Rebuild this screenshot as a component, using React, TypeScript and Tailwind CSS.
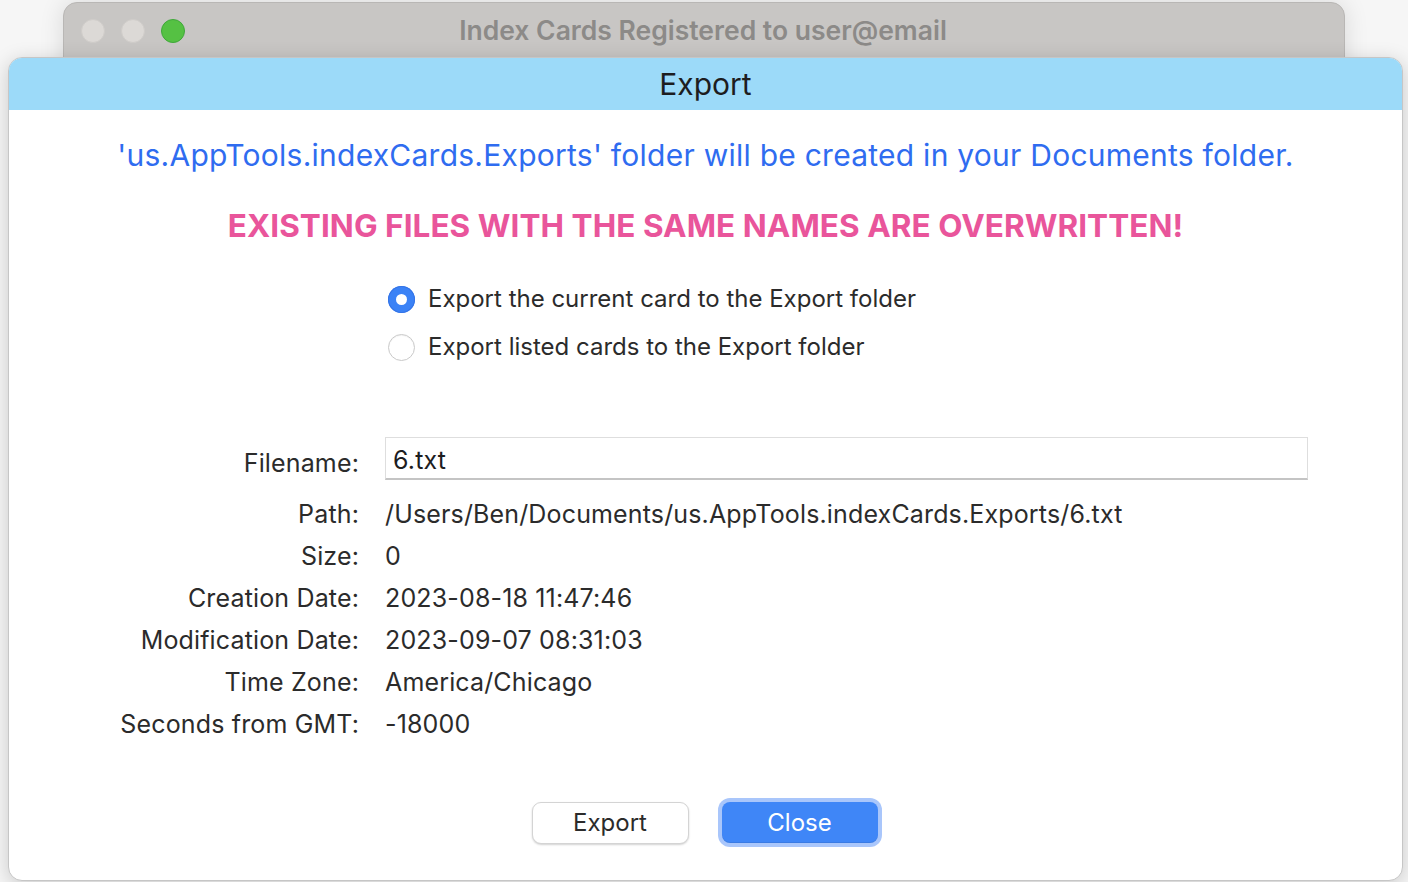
import React from "react";

const font = { fontFamily: "Inter, 'Noto Sans', 'Liberation Sans', sans-serif" };

const details: [string, string][] = [
  ["Path:", "/Users/Ben/Documents/us.AppTools.indexCards.Exports/6.txt"],
  ["Size:", "0"],
  ["Creation Date:", "2023-08-18 11:47:46"],
  ["Modification Date:", "2023-09-07 08:31:03"],
  ["Time Zone:", "America/Chicago"],
  ["Seconds from GMT:", "-18000"],
];

function Radio({ checked, label }: { checked?: boolean; label: string }) {
  return (
    <label className="flex h-[48px] items-center gap-[13px]">
      {checked ? (
        <span className="flex h-[27px] w-[27px] items-center justify-center rounded-full bg-[#3b82f6] shadow-[inset_0_0_0_1px_#3574e6]">
          <span className="h-[11px] w-[11px] rounded-full bg-white" />
        </span>
      ) : (
        <span className="h-[27px] w-[27px] rounded-full border border-[#c9c9c9] bg-white shadow-[inset_0_1px_1px_rgba(0,0,0,0.05)]" />
      )}
      <span className="text-[24px] text-[#2b2b2b]">{label}</span>
    </label>
  );
}

export default function App() {
  return (
    <div className="relative h-[882px] w-[1408px] overflow-hidden bg-[#f6f6f6]" style={font}>
      {/* back window */}
      <div className="absolute left-[63px] top-[2px] h-[200px] w-[1282px] rounded-t-[14px] border border-[#b9b7b5] bg-[#c8c6c4] shadow-[0_0_24px_rgba(0,0,0,0.12)]">
        <div className="flex h-[55px] items-center px-[17px]">
          <div className="flex gap-[16px]">
            <span className="h-[24px] w-[24px] rounded-full border border-[#cfccc9] bg-[#dcd9d6]" />
            <span className="h-[24px] w-[24px] rounded-full border border-[#cfccc9] bg-[#dcd9d6]" />
            <span className="h-[24px] w-[24px] rounded-full border border-[#3fa83a] bg-[#55c143]" />
          </div>
          <div className="flex-1 pr-[106px] text-center text-[26.5px] font-semibold text-[#8c8a88]">
            Index Cards Registered to user@email
          </div>
        </div>
      </div>

      {/* sheet */}
      <div className="absolute left-[8px] top-[57px] flex h-[824px] w-[1395px] flex-col overflow-hidden rounded-[14px] border border-[#c6c6c6] bg-white shadow-[0_4px_20px_rgba(0,0,0,0.18)]">
        <div className="flex h-[52px] items-center justify-center bg-[#9cdaf9] text-[30px] text-[#1d1d1f]">
          Export
        </div>

        <p className="mt-[23px] text-center text-[30px] tracking-[0.25px] text-[#2f6cf0]">
          'us.AppTools.indexCards.Exports' folder will be created in your Documents folder.
        </p>
        <p className="mt-[24px] text-center text-[31.5px] font-bold tracking-[0.05px] text-[#e9559b]">
          EXISTING FILES WITH THE SAME NAMES ARE OVERWRITTEN!
        </p>

        <div className="ml-[379px] mt-[26px] flex flex-col">
          <Radio checked label="Export the current card to the Export folder" />
          <Radio label="Export listed cards to the Export folder" />
        </div>

        <div className="mt-[66px] grid grid-cols-[350px_1fr] gap-x-[26px] text-[25px] tracking-[0.15px] text-[#2b2b2b]">
          <div className="flex h-[43px] items-center justify-end pt-[9px]">Filename:</div>
          <div className="flex h-[43px] w-[923px] items-center border border-[#dedede] border-b-[#c4c4c4] border-b-2 bg-white px-[7px] pt-[4px] text-[#1d1d1f]">
            6.txt
          </div>
          {details.map(([label, value], i) => (
            <React.Fragment key={label}>
              <div className={`flex h-[42px] items-center justify-end ${i === 0 ? "mt-[13px]" : ""}`}>{label}</div>
              <div className={`flex h-[42px] items-center ${i === 0 ? "mt-[13px]" : ""}`}>{value}</div>
            </React.Fragment>
          ))}
        </div>

        <div className="mt-[53px] flex items-center justify-center gap-[29px] pl-[2px]">
          <button className="h-[42px] w-[157px] rounded-[9px] border border-[#d4d4d4] bg-white text-[24px] text-[#2b2b2b] shadow-[0_1px_2px_rgba(0,0,0,0.18)]">
            Export
          </button>
          <div className="rounded-[12px] bg-[#a9c6fb] p-[4px]">
            <button className="h-[41px] w-[156px] rounded-[8px] bg-[#3f86f7] text-[24px] text-white shadow-[inset_0_-1px_0_rgba(0,0,0,0.08)]">
              Close
            </button>
          </div>
        </div>
      </div>
    </div>
  );
}
